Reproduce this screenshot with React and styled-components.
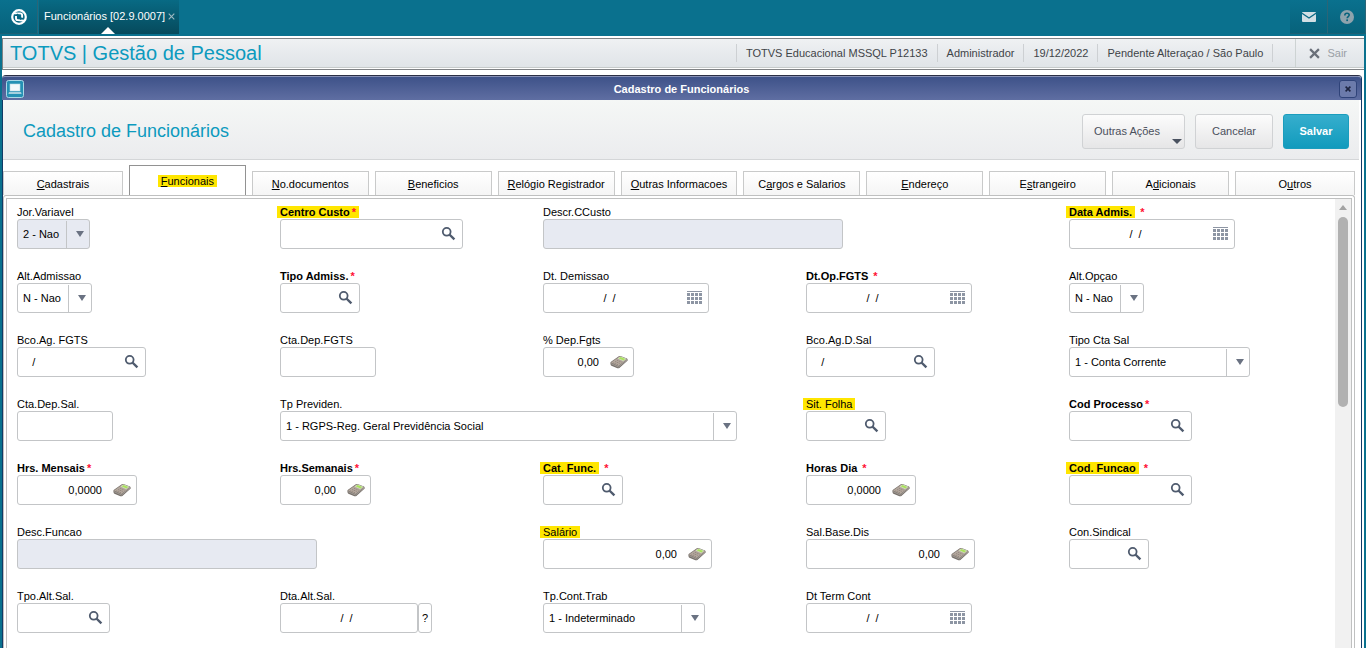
import React from 'react'
import { useState } from 'react';
import styled, { createGlobalStyle } from 'styled-components'

const GlobalStyle = createGlobalStyle`
  * { box-sizing: border-box; }
  body {
    margin: 0;
    background-color: #0a718e;
    font-family: "Liberation Sans", Arial, sans-serif;
    font-size: 11px;
    color: #000;
  }
  button, input, select { font: inherit; color: inherit; }
`;

const Page = styled.div`
  height: 100vh;
  display: flex;
  flex-direction: column;
  overflow: hidden;
`;

/* top bar */
const TopBar = styled.header`
  flex: none;
  height: 36px;
  display: flex;
  align-items: flex-start;
`;
const TopButton = styled.button`
  width: 38px;
  height: 34px;
  padding: 0;
  display: flex;
  align-items: center;
  justify-content: center;
  border: none;
  border-right: 1px solid #2b6577;
  border-bottom: 1px solid #1b6074;
  background: linear-gradient(#0a718e, #07627b);
`;
const OpenTab = styled.div`
  position: relative;
  height: 34px;
  margin-left: 1px;
  padding: 0 4px 2px 5px;
  display: flex;
  align-items: center;
  gap: 3px;
  color: #fff;
  background: linear-gradient(#086a84, #064a5c);
`;
const Pointer = styled.span`
  position: absolute;
  left: 62px;
  bottom: 0;
  border: 7px solid transparent;
  border-top: none;
  border-bottom-color: #fff;
`;
const CloseTab = styled.button`
  padding: 0;
  display: flex;
  border: none;
  background: none;
  color: #9fb9c2;
`;
const Spacer = styled.div`
  flex: 1;
`;

/* system header */
const Sheet = styled.main`
  flex: 1;
  min-height: 0;
  margin: 0 2px;
  padding-top: 2px;
  display: flex;
  flex-direction: column;
  background-color: #fff;
`;
const SystemBar = styled.div`
  flex: none;
  height: 32px;
  padding-left: 7px;
  display: flex;
  align-items: stretch;
  border: 1px solid #808285;
  border-right: none;
  background: linear-gradient(#eff1f3, #dfe3e7);
  box-shadow: inset 0 -1px #fff, inset 0 -2px #c6caca;
`;
const SystemName = styled.h1`
  flex: 1;
  margin: 0;
  font-size: 20px;
  font-weight: normal;
  line-height: 28px;
  color: #0c9abe;
`;
const Info = styled.span`
  margin: 5px 0 7px;
  padding: 0 9px;
  border-left: 1px solid #cdd0d3;
  line-height: 18px;
  color: #3f4448;
`;
const InfoEnd = styled(Info)`
  width: 23px;
  padding: 0;
`;
const Exit = styled.button`
  margin: 0 0 2px;
  padding: 0 17px 0 13px;
  display: flex;
  align-items: center;
  gap: 7px;
  border: none;
  border-left: 1px solid #cdd3d3;
  background: none;
  color: #9a9fa5;
`;

/* window */
const Window = styled.section`
  flex: 1;
  min-height: 0;
  margin: 5px 2px 0 0;
  display: flex;
  flex-direction: column;
  border: 1px solid #123a66;
  border-top-color: #2b2f45;
  border-left-width: 0;
  border-bottom: none;
  border-radius: 4px 4px 0 0;
  box-shadow: inset 1px 0 #123a66;
  background-color: #fff;
`;
const WindowTitle = styled.div`
  flex: none;
  height: 24px;
  padding: 0 4px;
  display: flex;
  align-items: center;
  border-top: 1px solid #8790b5;
  border-radius: 3px 3px 0 0;
  background: linear-gradient(#3e5289, #5f6ea2);
  color: #fff;
`;
const WindowName = styled.h2`
  flex: 1;
  margin: 0;
  font-size: 11px;
  line-height: 18px;
  text-align: center;
`;
const WindowIcon = styled.span`
  width: 18px;
  height: 18px;
  display: flex;
`;
const CloseWindow = styled.button`
  width: 18px;
  height: 18px;
  padding: 0;
  display: flex;
  align-items: center;
  justify-content: center;
  border: 1px solid #2f4379;
  border-radius: 3px;
  background-color: #6c7bab;
`;
const Heading = styled.div`
  flex: none;
  height: 60px;
  margin: 0 2px 0 1px;
  padding: 3px 10px 0 20px;
  display: flex;
  align-items: center;
  gap: 10px;
  border-bottom: 1px solid #d4d6d8;
  background: linear-gradient(#f5f7f6, #ebecee);
`;
const HeadingTitle = styled.h3`
  flex: 1;
  margin: 0;
  font-size: 18px;
  font-weight: normal;
  line-height: 20px;
  color: #0c9abe;
`;
const Action = styled.button`
  position: relative;
  height: 35px;
  min-width: ${props => props.$primary ? "66px" : "78px"};
  padding: ${props => props.$menu ? "0 24px 0 11px" : "0 10px"};
  border: 1px solid ${props => props.$primary ? "#1b9dbd" : "#d0d2d4"};
  border-radius: 3px;
  background: ${props => props.$primary
    ? "linear-gradient(#36aecd, #119bbd)"
    : "linear-gradient(#fcfcfc, #e6e6e7)"};
  color: ${props => props.$primary ? "#fff" : "#4a4f5c"};
  font-weight: ${props => props.$primary ? "bold" : "normal"};
`;
const MenuMark = styled.span`
  position: absolute;
  right: 2px;
  bottom: 4px;
  border: 5px solid transparent;
  border-top-color: #4a5260;
  border-bottom: none;
`;

/* tabs */
const Tabs = styled.nav`
  flex: none;
  height: 35px;
  margin: 0 6px 0 1px;
  display: grid;
  grid-template-columns: 120fr repeat(9, 117fr) 120fr;
  align-items: end;
  gap: 6px;
`;
const Tab = styled.button`
  min-width: 0;
  height: ${props => props.$active ? "30px" : "24px"};
  padding: ${props => props.$active ? "0" : "1px 0 0"};
  border: 1px solid ${props => props.$active ? "#929292" : "#c9caca"};
  border-bottom: none;
  background: ${props => props.$active ? "#fff" : "linear-gradient(#fff, #f5f5f5)"};
  white-space: nowrap;
`;
const Highlight = styled.mark`
  margin: 0 -3px;
  padding: 0 3px;
  background-color: #ffe600;
  color: inherit;
`;

/* form */
const Panel = styled.div`
  flex: 1;
  min-height: 0;
  margin: 0 6px 0 1px;
  padding: 0 2px;
  display: flex;
  border: 1px solid #bfc0c0;
  border-bottom: none;
  border-radius: 3px 3px 0 0;
`;
const PanelInner = styled.div`
  flex: 1;
  min-width: 0;
  margin-top: 2px;
  display: flex;
  border: 1px solid #bfc0c0;
  border-bottom: none;
  overflow: hidden;
`;
const Form = styled.form`
  flex: 1;
  min-width: 0;
  padding: 6px 3px 0 10px;
  display: grid;
  grid-template-columns: repeat(5, minmax(0, 1fr));
  grid-auto-rows: 64px;
`;
const Cell = styled.div`
  min-width: 0;
`;
const Label = styled.label`
  display: block;
  height: 14px;
  line-height: 14px;
  font-weight: ${props => props.$strong ? "bold" : "normal"};
  white-space: nowrap;
`;
const Star = styled.span`
  margin-left: ${props => props.$apart ? "5px" : "2px"};
  color: #ff1035;
`;
const Line = styled.div`
  display: flex;
`;
const Box = styled.div`
  flex: none;
  width: ${props => props.$width}px;
  height: 30px;
  display: flex;
  border: 1px solid #c3c5c7;
  border-radius: 3px;
  background-color: ${props => props.$off ? "#e7eaf2" : "#fff"};
`;
const TextInput = styled.input`
  flex: 1;
  width: 0;
  padding: ${props => props.$align === "center" ? "0 10px 0 5px" : "0 6px 0 5px"};
  border: none;
  outline: none;
  background: none;
  text-align: ${props => props.$align || "left"};
`;
const IconButton = styled.button`
  flex: none;
  width: 28px;
  padding: 0;
  display: flex;
  align-items: center;
  justify-content: center;
  border: none;
  background: none;
`;
const HelpButton = styled.button`
  width: 14px;
  height: 30px;
  padding: 0;
  border: 1px solid #c3c5c7;
  border-radius: 3px;
  background-color: #fff;
`;
const SelectBox = styled(Box)`
  display: grid;
`;
const Select = styled.select`
  grid-area: 1 / 1;
  min-width: 0;
  padding: 0 26px 0 5px;
  appearance: none;
  border: none;
  outline: none;
  background: none;
`;
const SelectArrow = styled.span`
  grid-area: 1 / 1;
  justify-self: end;
  width: 23px;
  margin-top: 1px;
  display: flex;
  align-items: center;
  justify-content: center;
  border-left: 1px solid #c3c5c7;
  pointer-events: none;
  &:before {
    content: "";
    margin: 0 0 2px 3px;
    border: 4px solid transparent;
    border-top: 6px solid #6a7282;
    border-bottom: none;
  }
`;
const ScrollTrack = styled.div`
  flex: none;
  width: 16px;
  padding-top: 6px;
  display: flex;
  flex-direction: column;
  align-items: center;
  gap: 7px;
  background-color: #f1f1f1;
`;
const ScrollUp = styled.span`
  border: 4px solid transparent;
  border-top: none;
  border-bottom: 5px solid #a3a3a3;
`;
const ScrollThumb = styled.span`
  width: 10px;
  height: 190px;
  border-radius: 5px;
  background-color: #b1b1b1;
`;

const SearchIcon = () => (
  <svg width="15" height="15" viewBox="0 0 15 15" fill="none" stroke="#4f5b6e">
    <circle cx="5.7" cy="4.8" r="3.9" strokeWidth="1.8" />
    <path d="M8.4 7.5l5 4.9" strokeWidth="2.4" />
  </svg>
)

const CalendarIcon = () => (
  <svg width="15" height="14" viewBox="0 0 15 14" fill="#8d95a3">
    <rect width="15" height="1" />
    {[2, 6, 10].map(y => [0, 4, 8, 12].map(x => (
      <rect key={x + "-" + y} x={x} y={y} width="3" height="3" />
    )))}
  </svg>
)

const CalculatorIcon = () => (
  <svg width="18" height="14" viewBox="0 0 18 14">
    <path d="M0.4 8.2Q0.2 7.4 1 6.8L8.8 1.3Q9.6 0.8 10.6 1.1L17 3.4Q17.8 3.8 17.7 5.4L9.4 13Q8.4 13.6 7.4 13.2L1.4 10.8Q0.5 10.4 0.4 8.2z" fill="#77706a" />
    <path d="M1 7.6L9.4 1.5 17.2 4.2 8.4 11z" fill="#b3a79d" />
    <path d="M8.2 3.5L10.6 1.8 15.8 3.8 13.3 5.8z" fill="#a9e25c" stroke="#dfead0" strokeWidth="0.6" />
    <path d="M3.2 7.8l4.8 1.9M5 6.5l4.8 1.9M6.8 5.2l4.8 1.9" stroke="#8a7d74" strokeWidth="0.7" strokeDasharray="1.4 0.6" />
    <path d="M1 8.6L8.4 12 17.2 5" fill="none" stroke="#c9c4be" strokeWidth="0.5" />
  </svg>
)

const LogoIcon = () => (
  <svg width="18" height="18" viewBox="0 0 18 18" fill="none">
    <circle cx="9" cy="9" r="6.8" stroke="#fff" strokeWidth="2.2" />
    <path d="M4 5.4h6.2c1.2 0 1.9.7 1.9 1.8v2.6" stroke="#fff" strokeWidth="1.9" />
    <path d="M6 8v2.2c0 1.2.7 1.9 1.9 1.9L14 12.8" stroke="#fff" strokeWidth="1.9" />
    <path d="M6.8 6.2l4.6 5" stroke="#07657f" strokeWidth="2" />
  </svg>
)

const MailIcon = () => (
  <svg width="14" height="10" viewBox="0 0 14 10">
    <rect width="14" height="10" rx="1" fill="#d3dfe4" />
    <path d="M0 1.2L7 6 14 1.2" fill="none" stroke="#0a6a84" strokeWidth="1.3" />
  </svg>
)

const QuestionIcon = () => (
  <svg width="14" height="14" viewBox="0 0 14 14">
    <circle cx="7" cy="7" r="7" fill="#8ea3ad" />
    <path d="M4.8 5.4c0-1.5 1-2.2 2.2-2.2s2.2.7 2.2 1.9c0 1.5-2 1.5-2 3.2" fill="none" stroke="#08637c" strokeWidth="1.6" />
    <rect x="6.3" y="9.4" width="1.7" height="1.7" fill="#08637c" />
  </svg>
)

const CrossIcon = ({ size, width, color }) => (
  <svg width={size} height={size} viewBox="0 0 10 10">
    <path d="M1 1l8 8M9 1L1 9" stroke={color || "currentColor"} strokeWidth={width} />
  </svg>
)

const ScreenIcon = () => (
  <svg width="18" height="18" viewBox="0 0 18 18">
    <rect x="0.5" y="0.5" width="17" height="17" rx="2" fill="#2591b4" stroke="#a9d8e6" />
    <rect x="4" y="4" width="10" height="7" fill="#f4f8fa" stroke="#b8dbe6" strokeWidth="0.6" />
    <path d="M3 12h12l0.6 2H2.4z" fill="#a5d0de" />
  </svg>
)

const icons = { search: SearchIcon, date: CalendarIcon, number: CalculatorIcon }
const aligns = { date: "center", number: "right" }

const infos = ["TOTVS Educacional MSSQL P12133", "Administrador", "19/12/2022", "Pendente Alteraçao / São Paulo"]

// second value is the index of the shortcut letter
const tabs = [
  ["Cadastrais", 0],
  ["Funcionais", 0],
  ["No.documentos", 0],
  ["Beneficios", 0],
  ["Relógio Registrador", 0],
  ["Outras Informacoes", 0],
  ["Cargos e Salarios", 1],
  ["Endereço", 0],
  ["Estrangeiro", 1],
  ["Adicionais", 1],
  ["Outros", 1],
]

const fields = [
  { label: "Jor.Variavel", type: "select", width: 73, value: "2 - Nao", off: true },
  { label: "Centro Custo", type: "search", width: 183, required: true, mark: true },
  { label: "Descr.CCusto", type: "text", width: 300, off: true },
  null,
  { label: "Data Admis.", type: "date", width: 166, required: true, apart: true, mark: true },

  { label: "Alt.Admissao", type: "select", width: 75, value: "N - Nao" },
  { label: "Tipo Admiss.", type: "search", width: 80, required: true },
  { label: "Dt. Demissao", type: "date", width: 166 },
  { label: "Dt.Op.FGTS", type: "date", width: 166, required: true, apart: true },
  { label: "Alt.Opçao", type: "select", width: 75, value: "N - Nao" },

  { label: "Bco.Ag. FGTS", type: "search", width: 129, value: "   /" },
  { label: "Cta.Dep.FGTS", type: "text", width: 96 },
  { label: "% Dep.Fgts", type: "number", width: 91, value: "0,00" },
  { label: "Bco.Ag.D.Sal", type: "search", width: 129, value: "   /" },
  { label: "Tipo Cta Sal", type: "select", width: 181, value: "1 - Conta Corrente" },

  { label: "Cta.Dep.Sal.", type: "text", width: 96 },
  { label: "Tp Previden.", type: "select", width: 457, value: "1 - RGPS-Reg. Geral Previdência Social" },
  null,
  { label: "Sit. Folha", type: "search", width: 80, mark: true },
  { label: "Cod Processo", type: "search", width: 123, required: true },

  { label: "Hrs. Mensais", type: "number", width: 120, value: "0,0000", required: true },
  { label: "Hrs.Semanais", type: "number", width: 91, value: "0,00", required: true },
  { label: "Cat. Func.", type: "search", width: 80, required: true, apart: true, mark: true },
  { label: "Horas Dia", type: "number", width: 110, value: "0,0000", required: true, apart: true },
  { label: "Cod. Funcao", type: "search", width: 123, required: true, apart: true, mark: true },

  { label: "Desc.Funcao", type: "text", width: 300, off: true },
  null,
  { label: "Salário", type: "number", width: 169, value: "0,00", mark: true },
  { label: "Sal.Base.Dis", type: "number", width: 169, value: "0,00" },
  { label: "Con.Sindical", type: "search", width: 80 },

  { label: "Tpo.Alt.Sal.", type: "search", width: 93 },
  { label: "Dta.Alt.Sal.", type: "date", width: 138, help: true },
  { label: "Tp.Cont.Trab", type: "select", width: 162, value: "1 - Indeterminado" },
  { label: "Dt Term Cont", type: "date", width: 166 },
  null,
]

const Field = ({ id, field }) => {
  const Icon = field.help ? null : icons[field.type];
  const star = field.required && <Star $apart={field.apart}>*</Star>;
  return (
    <Cell>
      <Label htmlFor={id} $strong={field.required}>
        {field.mark
          ? <Highlight>{field.label}{!field.apart && star}</Highlight>
          : field.label}
        {field.mark && field.apart && <>&nbsp;</>}
        {(!field.mark || field.apart) && star}
      </Label>
      {field.type === "select" ? (
        <SelectBox $width={field.width} $off={field.off}>
          <Select id={id}>
            <option>{field.value}</option>
          </Select>
          <SelectArrow />
        </SelectBox>
      ) : (
        <Line>
          <Box $width={field.width} $off={field.off}>
            <TextInput
              id={id}
              $align={aligns[field.type]}
              defaultValue={field.type === "date" ? "/  /" : field.value}
              readOnly={field.off}
            />
            {Icon && <IconButton type="button" aria-label={"Abrir " + field.label}><Icon /></IconButton>}
          </Box>
          {field.help && <HelpButton type="button">?</HelpButton>}
        </Line>
      )}
    </Cell>
  )
}

const App = () => {
  const [active, setActive] = useState("Funcionais");
  return (
    <Page>
      <GlobalStyle />
      <TopBar>
        <TopButton aria-label="Menu"><LogoIcon /></TopButton>
        <OpenTab>
          Funcionários [02.9.0007]
          <CloseTab aria-label="Fechar aba"><CrossIcon size={7} width={1.6} /></CloseTab>
          <Pointer />
        </OpenTab>
        <Spacer />
        <TopButton aria-label="Mensagens"><MailIcon /></TopButton>
        <TopButton aria-label="Ajuda"><QuestionIcon /></TopButton>
      </TopBar>
      <Sheet>
        <SystemBar>
          <SystemName>TOTVS | Gestão de Pessoal</SystemName>
          {infos.map(text => <Info key={text}>{text}</Info>)}
          <InfoEnd />
          <Exit><CrossIcon size={11} width={2} color="#6a7079" />Sair</Exit>
        </SystemBar>
        <Window>
          <WindowTitle>
            <WindowIcon><ScreenIcon /></WindowIcon>
            <WindowName>Cadastro de Funcionários</WindowName>
            <CloseWindow aria-label="Fechar"><CrossIcon size={6} width={2.6} color="#1d2440" /></CloseWindow>
          </WindowTitle>
          <Heading>
            <HeadingTitle>Cadastro de Funcionários</HeadingTitle>
            <Action $menu>Outras Ações<MenuMark /></Action>
            <Action>Cancelar</Action>
            <Action $primary>Salvar</Action>
          </Heading>
          <Tabs>
            {tabs.map(([name, key]) => {
              const text = <>{name.slice(0, key)}<u>{name[key]}</u>{name.slice(key + 1)}</>
              return (
                <Tab key={name} $active={name === active} onClick={() => setActive(name)}>
                  {name === "Funcionais" ? <Highlight>{text}</Highlight> : text}
                </Tab>
              )
            })}
          </Tabs>
          <Panel>
            <PanelInner>
              <Form>
                {fields.map((field, i) => field
                  ? <Field key={i} id={"campo-" + i} field={field} />
                  : <Cell key={i} />
                )}
              </Form>
              <ScrollTrack>
                <ScrollUp />
                <ScrollThumb />
              </ScrollTrack>
            </PanelInner>
          </Panel>
        </Window>
      </Sheet>
    </Page>
  )
}

export default App
